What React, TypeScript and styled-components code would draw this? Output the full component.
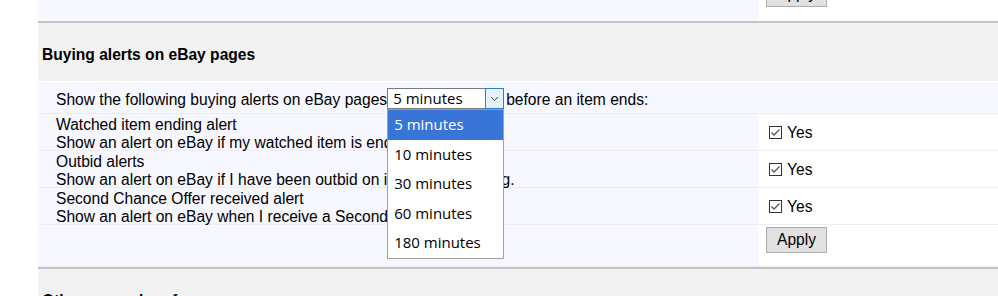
import React from "react";
import styled, { createGlobalStyle } from "styled-components";

const GlobalStyle = createGlobalStyle`
  html, body { margin: 0; padding: 0; background: #ffffff; }
  body { font-family: "Liberation Sans", Arial, sans-serif; font-size: 15.6px; color: #000; }
`;

const Page = styled.div`
  width: 998px;
  height: 296px;
  overflow: hidden;
  padding-left: 38px;
  box-sizing: border-box;
`;

const TwoCol = styled.div<{ $h?: number }>`
  display: grid;
  grid-template-columns: 721px 1fr;
  grid-template-rows: minmax(0, 1fr);
  ${(p) => (p.$h ? `height: ${p.$h}px;` : "")}
  box-sizing: border-box;
  border-bottom: 1px solid #ededf2;
`;

const LeftCell = styled.div`
  background: #f7f7ff;
  padding-left: 18px;
  padding-top: 4px;
  box-sizing: border-box;
  min-height: 0;
  display: flex;
  flex-direction: column;
  justify-content: center;
  line-height: 18px;
  white-space: nowrap;
`;

const RightCell = styled.div<{ $top?: boolean }>`
  background: #ffffff;
  padding-left: 7px;
  min-height: 0;
  display: flex;
  align-items: ${(p) => (p.$top ? "flex-start" : "center")};
`;

const TailRow = styled.div`
  display: grid;
  grid-template-columns: 721px 1fr;
  grid-template-rows: minmax(0, 1fr);
  height: 21px;
  overflow: hidden;
`;

const Divider = styled.div`
  height: 2px;
  background: #c3c3c3;
`;

const SectionHeader = styled.div`
  height: 59px;
  background: #f2f2f2;
  border-bottom: 1px solid #ffffff;
  display: flex;
  align-items: center;
  padding-left: 4px;
  padding-top: 5px;
  box-sizing: border-box;
  font-weight: bold;
  white-space: nowrap;
`;

const IntroRow = styled.div`
  height: 32px;
  box-sizing: border-box;
  background: #f7f7ff;
  border-bottom: 1px solid #ededf2;
  padding-left: 18px;
  padding-top: 1px;
  display: flex;
  align-items: center;
  white-space: nowrap;
`;

const IntroText = styled.span<{ $after?: boolean }>`
  display: inline-block;
  padding-top: 4px;
  margin-left: ${(p) => (p.$after ? "2px" : "0")};
`;

const SelectWrap = styled.div`
  position: relative;
  width: 117px;
  height: 21px;
  margin-top: 1px;
`;

const SelectBox = styled.div`
  display: flex;
  height: 21px;
  box-sizing: border-box;
  border: 1px solid #7a7a7a;
  border-right: none;
  background: #fff;
  font-family: "Open Sans", "Noto Sans", sans-serif;
  font-size: 15px;
`;

const SelectText = styled.div`
  flex: 1;
  padding-left: 5px;
  line-height: 19px;
`;

const ArrowBtn = styled.div`
  width: 19px;
  margin-top: -1px;
  height: 21px;
  box-sizing: border-box;
  border: 1px solid #2a7fd4;
  background: #e5f1fb;
  display: flex;
  align-items: center;
  justify-content: center;
`;

const ListBox = styled.ul`
  position: absolute;
  top: 21px;
  left: 0;
  width: 117px;
  box-sizing: border-box;
  margin: 0;
  padding: 0;
  list-style: none;
  background: #fff;
  border: 1px solid #a0a0a0;
  z-index: 10;
  font-family: "Open Sans", "Noto Sans", sans-serif;
  font-size: 15px;
`;

const Option = styled.li<{ $active?: boolean }>`
  height: 29.5px;
  line-height: 29.5px;
  padding-left: 6px;
  background: ${(p) => (p.$active ? "#3875d7" : "transparent")};
  color: ${(p) => (p.$active ? "#ffffff" : "#000000")};
`;

const CheckLabel = styled.label`
  display: flex;
  align-items: center;
  gap: 5px;
  padding-left: 3px;
  padding-top: 1px;
`;

const Button = styled.button<{ $tail?: boolean }>`
  font-family: "Liberation Sans", Arial, sans-serif;
  font-size: 15.6px;
  width: 61px;
  height: 26px;
  padding: 0;
  background: #e1e1e1;
  border: 1px solid #adadad;
  color: #000;
  margin-top: ${(p) => (p.$tail ? "-19px" : "2px")};
`;

const CheckIcon = () => (
  <svg width="13" height="13" viewBox="0 0 13 13">
    <rect x="0.5" y="0.5" width="12" height="12" fill="#fff" stroke="#333" />
    <path d="M2.5 6.5 L5 9 L10.5 3.5" fill="none" stroke="#555" strokeWidth="1.3" />
  </svg>
);

const Chevron = () => (
  <svg width="9" height="6" viewBox="0 0 9 6">
    <path d="M1 1 L4.5 4.5 L8 1" fill="none" stroke="#444" strokeWidth="1" />
  </svg>
);

const prefs = [
  ["Watched item ending alert", "Show an alert on eBay if my watched item is ending soon."],
  ["Outbid alerts", "Show an alert on eBay if I have been outbid on items I am bidding."],
  ["Second Chance Offer received alert", "Show an alert on eBay when I receive a Second Chance Offer."],
];

const options = ["5 minutes", "10 minutes", "30 minutes", "60 minutes", "180 minutes"];

export default function App() {
  return (
    <>
      <GlobalStyle />
      <Page>
        <TailRow>
          <LeftCell />
          <RightCell $top>
            <Button $tail>Apply</Button>
          </RightCell>
        </TailRow>
        <Divider />
        <SectionHeader>Buying alerts on eBay pages</SectionHeader>
        <IntroRow>
          <IntroText>Show the following buying alerts on eBay pages</IntroText>
          <SelectWrap>
            <SelectBox>
              <SelectText>5 minutes</SelectText>
              <ArrowBtn>
                <Chevron />
              </ArrowBtn>
            </SelectBox>
            <ListBox>
              {options.map((o, i) => (
                <Option key={o} $active={i === 0}>
                  {o}
                </Option>
              ))}
            </ListBox>
          </SelectWrap>
          <IntroText $after>before an item ends:</IntroText>
        </IntroRow>
        {prefs.map(([title, desc]) => (
          <TwoCol key={title} $h={37}>
            <LeftCell>
              <div>{title}</div>
              <div>{desc}</div>
            </LeftCell>
            <RightCell>
              <CheckLabel>
                <CheckIcon />
                Yes
              </CheckLabel>
            </RightCell>
          </TwoCol>
        ))}
        <TwoCol $h={42}>
          <LeftCell />
          <RightCell $top>
            <Button>Apply</Button>
          </RightCell>
        </TwoCol>
        <Divider />
        <SectionHeader>Other general preferences</SectionHeader>
      </Page>
    </>
  );
}
